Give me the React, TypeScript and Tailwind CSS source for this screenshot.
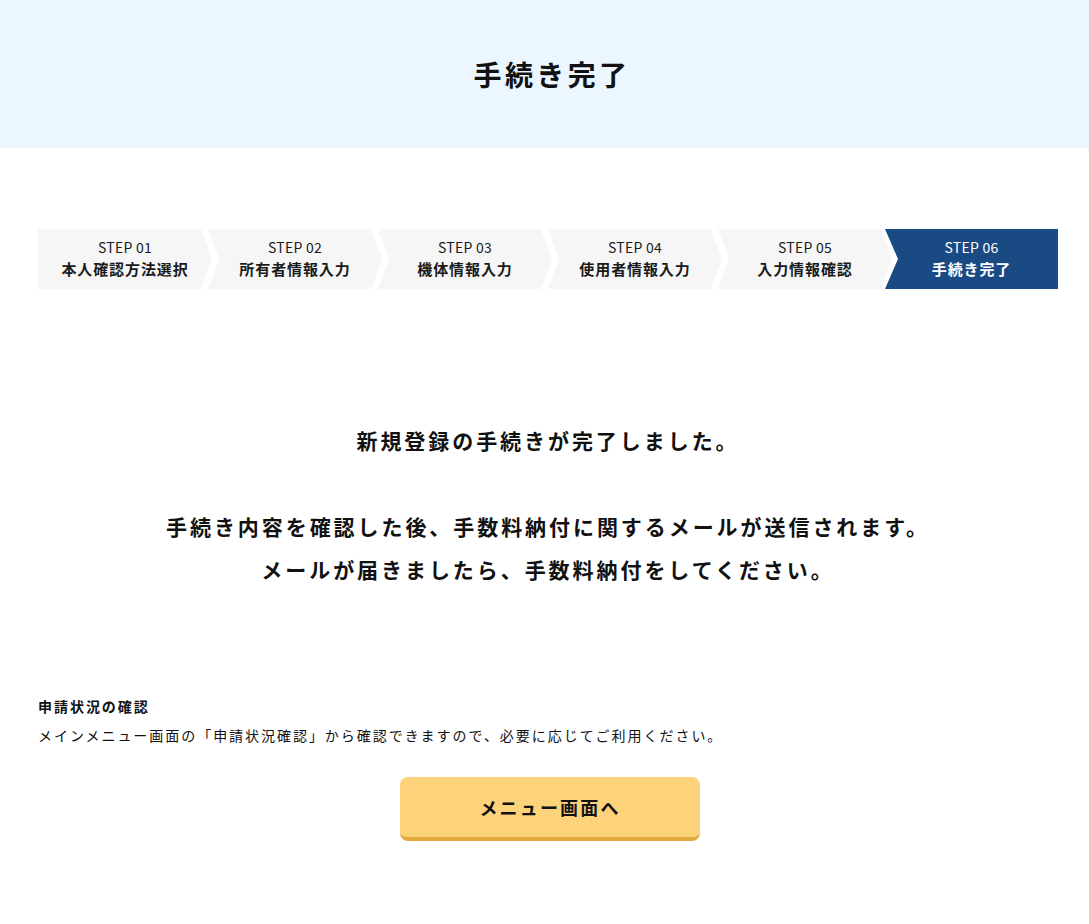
const steps = [
  { no: "01", label: "本人確認方法選択" },
  { no: "02", label: "所有者情報入力" },
  { no: "03", label: "機体情報入力" },
  { no: "04", label: "使用者情報入力" },
  { no: "05", label: "入力情報確認" },
  { no: "06", label: "手続き完了" },
];

function StepBar() {
  return (
    <ol className="flex h-[60px]">
      {steps.map((s, i) => {
        const first = i === 0;
        const last = i === steps.length - 1;
        const shape = first
          ? "w-[174px] -mr-[4px] [clip-path:polygon(0_0,calc(100%-11px)_0,100%_50%,calc(100%-11px)_100%,0_100%)]"
          : last
          ? "w-[173px] -ml-[3px] [clip-path:polygon(0_0,100%_0,100%_100%,0_100%,13px_50%)]"
          : "w-[174px] -mr-[4px] [clip-path:polygon(0_0,calc(100%-11px)_0,100%_50%,calc(100%-11px)_100%,0_100%,11px_50%)]";
        return (
          <li
            key={s.no}
            className={`${shape} shrink-0 flex flex-col items-center justify-center ${
              last ? "bg-[#1a4a84] text-white" : "bg-[#f6f6f6] text-[#1a1a1a]"
            }`}
          >
            <span className="text-[14px] leading-[20px] tracking-[0.02em]">STEP {s.no}</span>
            <span className="text-[15px] leading-[24px] font-bold tracking-[0.06em]">{s.label}</span>
          </li>
        );
      })}
    </ol>
  );
}

export default function App() {
  return (
    <div className="min-h-screen bg-white overflow-hidden">
      <div
        className="w-[1096px] text-[#111]"
        style={{ fontFamily: '"Noto Sans CJK JP", "Noto Sans", sans-serif' }}
      >
        <header className="h-[148px] bg-[#ebf6ff] flex items-center justify-center pl-[8px]">
          <h1 className="text-[28px] font-bold tracking-[0.12em] leading-none">手続き完了</h1>
        </header>

        <main className="w-[1020px] mx-auto">
          <div className="mt-[81px]">
            <StepBar />
          </div>

          <p className="mt-[130px] text-center text-[21px] leading-[43px] font-bold tracking-[0.14em]">
            新規登録の手続きが完了しました。
            <br />
            <br />
            手続き内容を確認した後、手数料納付に関するメールが送信されます。
            <br />
            メールが届きましたら、手数料納付をしてください。
          </p>

          <section className="mt-[103px]">
            <h2 className="text-[14px] leading-[24px] font-bold tracking-[0.14em]">申請状況の確認</h2>
            <p className="mt-[5px] text-[14px] leading-[24px] tracking-[0.14em]">
              メインメニュー画面の「申請状況確認」から確認できますので、必要に応じてご利用ください。
            </p>
          </section>

          <div className="mt-[30px] flex justify-center pl-[4px]">
            <button className="w-[300px] h-[64px] rounded-[8px] bg-[#fcd27b] border-b-[4px] border-[#e3a93c] text-[18px] font-bold tracking-[0.12em] text-[#111]">
              メニュー画面へ
            </button>
          </div>
        </main>
      </div>
    </div>
  );
}
